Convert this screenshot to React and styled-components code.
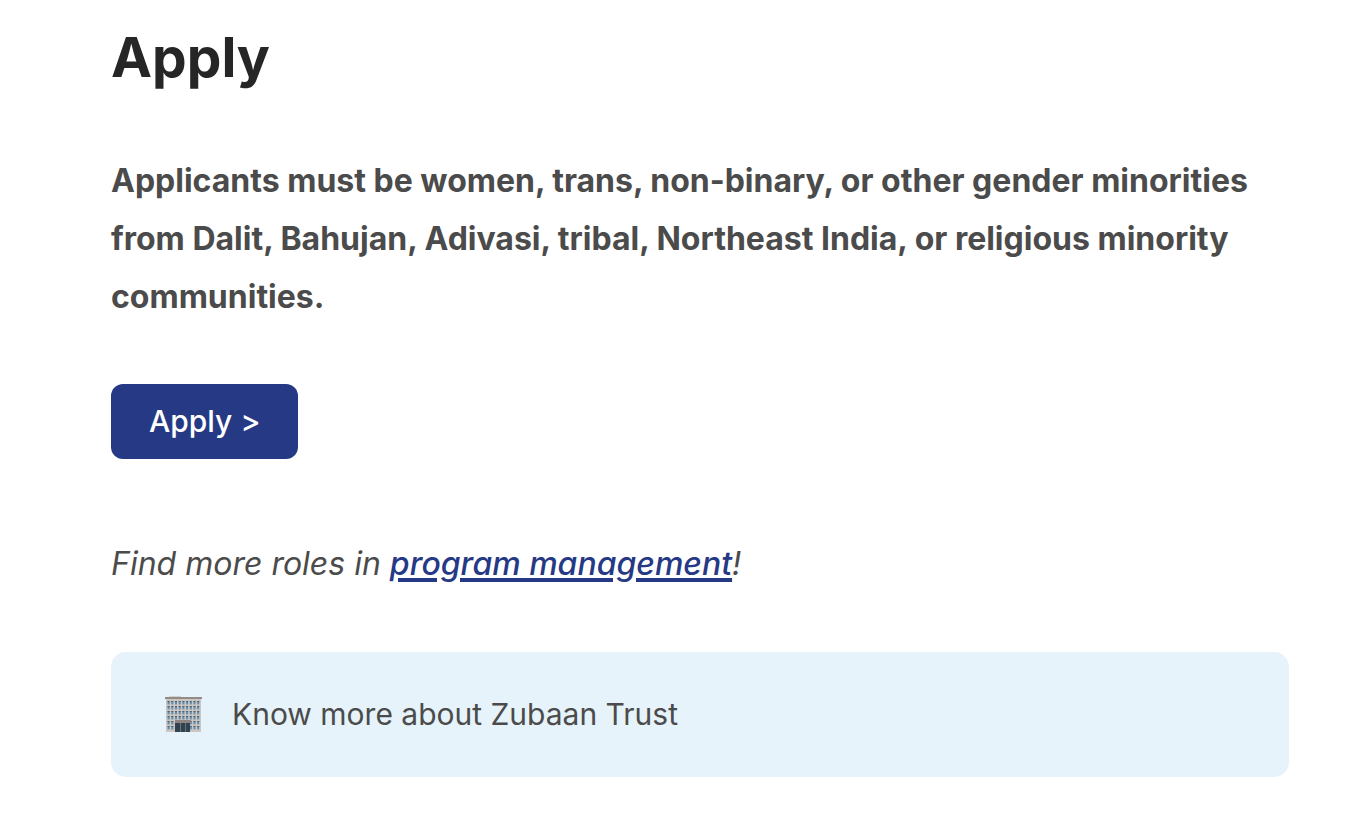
import React from 'react';
import styled, { createGlobalStyle } from 'styled-components';

const GlobalStyle = createGlobalStyle`
  body {
    margin: 0;
    background: #fff;
    color: #4b4b4b;
    font-family: Inter, "Open Sans", sans-serif;
    font-size: 32px;
    line-height: 58px;
  }
`;

const Page = styled.main`
  padding: 24px 67px 43px 111px;
`;

const Title = styled.h2`
  margin: 0 0 62px;
  color: #262626;
  font-size: 55px;
  font-weight: 700;
  line-height: 66px;
`;

const Requirement = styled.p`
  margin: 0 0 58px;
  font-weight: 700;
`;

const ApplyButton = styled.button`
  display: block;
  padding: 16px 38px 17px;
  border: none;
  border-radius: 12px;
  background: #253985;
  color: #fff;
  font-family: inherit;
  font-size: 30px;
  font-weight: 500;
  line-height: 42px;
  cursor: pointer;
`;

const MoreRoles = styled.p`
  margin: 76px 0 59px;
  font-style: italic;
`;

const RoleLink = styled.a`
  color: #253985;
  font-weight: 500;
  text-decoration: underline;
  text-decoration-thickness: 4px;
  text-underline-offset: 3px;
`;

const Callout = styled.aside`
  display: flex;
  align-items: center;
  gap: 30px;
  padding: 36px 54px 37px;
  border-radius: 15px;
  background: #e6f3fa;
  font-size: 30px;
  line-height: 52px;
`;

const BuildingSvg = styled.svg`
  flex: none;
  width: 37px;
  height: 37px;
`;

const windowColumns = [2.6, 6.3, 10, 13.7, 17.4, 21.1, 24.8, 28.5, 32.2];
const windowRows = [5, 10, 15, 20, 25, 30];

function BuildingIcon() {
  return (
    <BuildingSvg viewBox="0 0 37 37" aria-hidden="true">
      <rect x="4" y="0" width="12" height="2" fill="#d3d1d0" />
      <rect x="1" y="3" width="35" height="33" fill="#cbc6c2" />
      <rect x="0" y="1" width="37" height="2" fill="#948a86" />
      {windowRows.map(y =>
        windowColumns.map(x => (
          <g key={`${x}-${y}`}>
            <rect x={x} y={y} width="2" height="3.4" fill="#648cab" />
            <rect x={x} y={y} width="2" height="1" fill="#486478" />
          </g>
        ))
      )}
      <rect x="10" y="24" width="16" height="3" fill="#8f8580" />
      <rect x="10" y="27" width="15" height="9" fill="#34424f" />
      <path d="M15.5 27v9M20.5 27v9" stroke="#647785" strokeWidth="1" />
    </BuildingSvg>
  );
}

function App() {
  return (
    <>
      <GlobalStyle />
      <Page>
        <Title>Apply</Title>
        <Requirement>
          Applicants must be women, trans, non-binary, or other gender minorities
          from Dalit, Bahujan, Adivasi, tribal, Northeast India, or religious minority
          communities.
        </Requirement>
        <ApplyButton type="button">Apply &gt;</ApplyButton>
        <MoreRoles>
          Find more roles in <RoleLink href="#program-management">program management</RoleLink>!
        </MoreRoles>
        <Callout>
          <BuildingIcon />
          <span>Know more about Zubaan Trust</span>
        </Callout>
      </Page>
    </>
  );
}

export default App;
